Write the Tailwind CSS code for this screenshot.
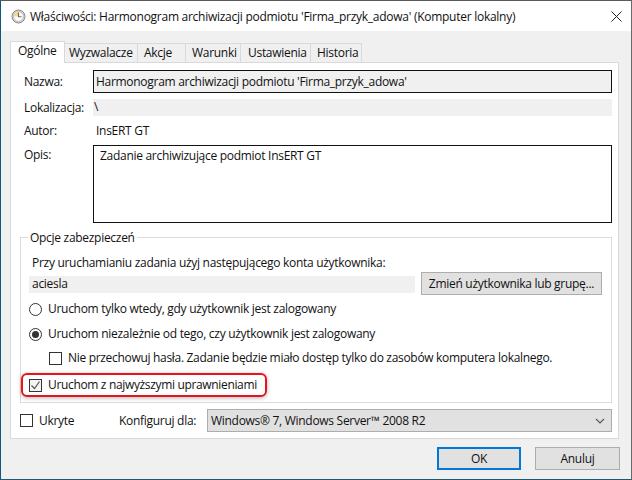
<!DOCTYPE html>
<html lang="pl">
<head>
<meta charset="UTF-8">
<title>Właściwości</title>
<script src="https://cdn.jsdelivr.net/npm/@tailwindcss/browser@4"></script>
</head>
<body class="m-0 bg-[#f0f0f0]">
<div class="w-[632px] h-[480px] overflow-hidden flex flex-col border border-t-[#5a5a5a] border-l-[#0f5a7c] border-r-[#6a6a6a] border-b-[#1f5a72] bg-[#f0f0f0] text-[12px] leading-[16px] text-[#111] font-['Open_Sans',sans-serif] tracking-[-0.29px]">
  <!-- Title bar -->
  <div class="h-[30px] shrink-0 bg-white flex items-center pl-[10px] pr-[9px] pt-[1px]">
    <svg width="15" height="15" viewBox="0 0 15 15" class="mr-[4px]">
      <circle cx="7.5" cy="7.5" r="6.5" fill="#d4d4d4" stroke="#8a8a8a"/>
      <circle cx="7.5" cy="7.5" r="4.8" fill="#ffffff" stroke="#a9a9a9" stroke-width=".6"/>
      <path d="M7.5 7.5V2.7A4.8 4.8 0 0 0 2.7 7.5Z" fill="#f3d98a"/>
      <path d="M7.5 3.6V7.7H10.6" fill="none" stroke="#6f6a58" stroke-width="1.1"/>
    </svg>
    <span class="flex-1 whitespace-nowrap tracking-[-0.265px]">Właściwości: Harmonogram archiwizacji podmiotu 'Firma_przyk_adowa' (Komputer lokalny)</span>
    <svg width="11" height="11" viewBox="0 0 11 11"><path d="M.5.5l10 10M10.5.5l-10 10" stroke="#222" fill="none"/></svg>
  </div>
  <!-- Tabs -->
  <div class="pl-[9px] pr-[11px] pt-[10px] flex-1 flex flex-col">
    <div class="flex items-end h-[22px] relative z-10">
      <div class="h-[22px] w-[55px] bg-white border border-b-0 border-[#d9d9d9] pl-[7px] pt-[1px]">Ogólne</div>
      <div class="h-[20px] w-[73px] border border-l-0 border-b-0 border-[#d9d9d9] pl-[4px] pt-[1px]">Wyzwalacze</div>
      <div class="h-[20px] w-[48px] border border-l-0 border-b-0 border-[#d9d9d9] pl-[6px] pt-[1px]">Akcje</div>
      <div class="h-[20px] w-[55px] border border-l-0 border-b-0 border-[#d9d9d9] pl-[6px] pt-[1px]">Warunki</div>
      <div class="h-[20px] w-[70px] border border-l-0 border-b-0 border-[#d9d9d9] pl-[7px] pt-[1px]">Ustawienia</div>
      <div class="h-[20px] w-[51px] border border-l-0 border-b-0 border-[#d9d9d9] pl-[6px] pt-[1px]">Historia</div>
    </div>
    <!-- Panel -->
    <div class="h-[377px] -mt-px mr-[1px] bg-white border border-[#d9d9d9] pl-[9px] pr-[6px] pt-[7px] flex flex-col">
      <div class="flex items-center h-[23px]">
        <span class="w-[73px] pl-[4px]">Nazwa:</span>
        <div class="flex-1 h-[23px] border border-[#111] bg-[#f0f0f0] pl-[2px] flex items-center">Harmonogram archiwizacji podmiotu 'Firma_przyk_adowa'</div>
      </div>
      <div class="flex items-center h-[17px] mt-[6px]">
        <span class="w-[73px] pl-[4px]">Lokalizacja:</span>
        <div class="flex-1 h-[17px] bg-[#f0f0f0] pl-[1px]">\</div>
      </div>
      <div class="flex items-center h-[17px] mt-[6px] pt-[1px]">
        <span class="w-[73px] pl-[4px]">Autor:</span>
        <div class="flex-1 pl-[3px]">InsERT GT</div>
      </div>
      <div class="flex mt-[6px] h-[78px]">
        <span class="w-[73px] pl-[4px] pt-[2px]">Opis:</span>
        <div class="flex-1 border border-[#111] pl-[6px] pt-[2px]">Zadanie archiwizujące podmiot InsERT GT</div>
      </div>
      <!-- Security options -->
      <div class="relative mt-[14px] h-[166px] border border-[#dcdcdc] pl-[8px] pr-[9px] pt-[17px] flex flex-col">
        <span class="absolute left-[7px] -top-[8px] bg-white px-[2px]">Opcje zabezpieczeń</span>
        <div class="pl-[3px] h-[16px]">Przy uruchamianiu zadania użyj następującego konta użytkownika:</div>
        <div class="flex items-start mt-[1px] h-[23px]">
          <div class="mt-[4px] w-[386px] h-[17px] bg-[#f0f0f0] pl-[3px] leading-[16px]">aciesla</div>
          <button class="ml-[6px] w-[181px] h-[23px] bg-[#e1e1e1] border border-[#adadad]">Zmień użytkownika lub grupę...</button>
        </div>
        <label class="flex items-center mt-[4px] h-[20px] gap-[6px]">
          <span class="w-[13px] h-[13px] rounded-full border border-[#333] bg-white"></span>Uruchom tylko wtedy, gdy użytkownik jest zalogowany
        </label>
        <label class="flex items-center mt-[5px] h-[20px] gap-[6px]">
          <span class="w-[13px] h-[13px] rounded-full border border-[#333] bg-white flex items-center justify-center"><span class="w-[7px] h-[7px] rounded-full bg-[#333]"></span></span>Uruchom niezależnie od tego, czy użytkownik jest zalogowany
        </label>
        <label class="flex items-center mt-[6px] ml-[20px] h-[16px] gap-[6px] tracking-[-0.31px]">
          <span class="w-[13px] h-[13px] border border-[#333] bg-white"></span>Nie przechowuj hasła. Zadanie będzie miało dostęp tylko do zasobów komputera lokalnego.
        </label>
        <!-- Red marker round the option -->
        <label class="relative flex items-center mt-[11px] h-[16px] gap-[6px] tracking-[-0.34px]">
          <span class="absolute -left-[8px] -top-[4px] w-[246px] h-[24px] rounded-[6px] border-2 border-[#e8141c] shadow-[0_1px_4px_rgba(0,0,0,.3)]"></span>
          <span class="w-[13px] h-[13px] border border-[#333] bg-[#f4f4f4] flex items-center justify-center">
            <svg width="11" height="11" viewBox="0 0 11 11"><path d="M1.5 5.5l3 3 5-7" fill="none" stroke="#555" stroke-width="1.2"/></svg>
          </span>Uruchom z najwyższymi uprawnieniami
        </label>
      </div>
      <!-- Bottom row of the tab -->
      <div class="flex items-center mt-[6px] h-[23px]">
        <span class="w-[13px] h-[13px] -mt-[1px] border border-[#333] bg-white"></span>
        <span class="ml-[6px] w-[80px]">Ukryte</span>
        <span class="w-[88px]">Konfiguruj dla:</span>
        <div class="flex-1 h-[23px] bg-[#e1e1e1] border border-[#adadad] pl-[3px] pr-[6px] flex items-center justify-between">
          <span>Windows® 7, Windows Server™ 2008 R2</span>
          <svg width="10" height="6" viewBox="0 0 10 6"><path d="M1 1l4 4 4-4" fill="none" stroke="#555" stroke-width="1.1"/></svg>
        </div>
      </div>
    </div>
    <!-- Dialog buttons -->
    <div class="flex justify-end mt-[8px] gap-[14px]">
      <button class="w-[84px] h-[23px] bg-[#e1e1e1] border-2 border-[#0078d7]">OK</button>
      <button class="w-[85px] h-[23px] bg-[#e1e1e1] border border-[#adadad]">Anuluj</button>
    </div>
  </div>
</div>
</body>
</html>
